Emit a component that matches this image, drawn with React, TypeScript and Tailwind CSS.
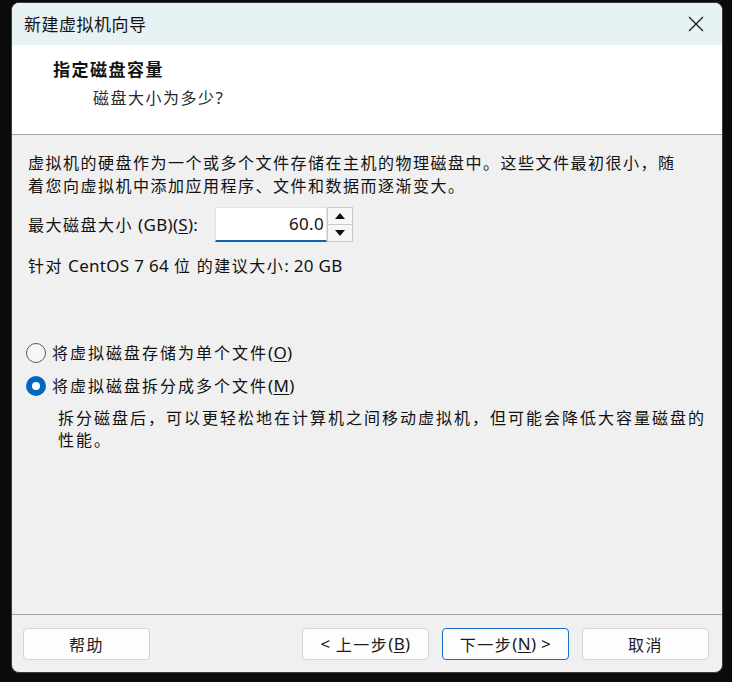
import React from 'react';

const cjk = { fontFamily: '"Noto Sans CJK SC", "Noto Sans", sans-serif' };

const U = ({ children }: { children: React.ReactNode }) => (
	<span className="underline underline-offset-2">{children}</span>
);

const Latin = ({ children }: { children: React.ReactNode }) => (
	<span className="tracking-[0.3px] text-[17px]" style={{ fontFamily: '"Noto Sans", "Noto Sans CJK SC", sans-serif' }}>
		{children}
	</span>
);

const Radio = ({ checked }: { checked?: boolean }) =>
	checked ? (
		<span className="w-[20px] h-[20px] rounded-full bg-[#0067c0] flex items-center justify-center shrink-0">
			<span className="w-[8px] h-[8px] rounded-full bg-white" />
		</span>
	) : (
		<span className="w-[20px] h-[20px] rounded-full border border-[#5a5a5a] bg-[#f6f6f6] shrink-0" />
	);

const Button = ({ children, primary }: { children: React.ReactNode; primary?: boolean }) => (
	<button
		className={
			primary
				? 'w-[127px] h-[32px] rounded-[4px] border border-[#1b6ec2] bg-[#fdfdfd] text-[16px] tracking-[1.5px] text-[#1a1a1a] flex items-center justify-center'
				: 'w-[127px] h-[32px] rounded-[4px] border border-[#d4d4d4] bg-[#fdfdfd] text-[16px] tracking-[1.5px] text-[#1a1a1a] flex items-center justify-center'
		}
	>
		{children}
	</button>
);

export default function App() {
	return (
		<div className="w-[732px] h-[682px] bg-[#0b0b0b] pt-[2px] pl-[11px]" style={cjk}>
			<div className="w-[712px] h-[671px] rounded-[8px] border border-[#3c3c3c] overflow-hidden bg-[#f0f0f0] flex flex-col text-[#111]">
				{/* title bar */}
				<div className="h-[42px] bg-[#e7f2f4] flex items-center justify-between pl-[12px] pr-[18px] shrink-0">
					<span className="text-[17px] tracking-[0.5px]">新建虚拟机向导</span>
					<svg width="16" height="16" viewBox="0 0 16 16" className="text-[#1a1a1a]">
						<path d="M1 1 L15 15 M15 1 L1 15" stroke="currentColor" strokeWidth="1.3" fill="none" />
					</svg>
				</div>

				{/* header */}
				<div className="h-[90px] bg-white border-b border-[#a3a3a3] shrink-0 pt-[12px] pl-[41px]">
					<div className="text-[17px] font-bold tracking-[1.5px] leading-[24px]">指定磁盘容量</div>
					<div className="text-[16px] tracking-[1.5px] leading-[24px] pl-[40px] mt-[4px] text-[#2a2a2a]">
						磁盘大小为多少<Latin>?</Latin>
					</div>
				</div>

				{/* body */}
				<div className="flex-1 px-[16px] pt-[16px] text-[16px] tracking-[1.5px]">
					<p className="leading-[23px]">
						虚拟机的硬盘作为一个或多个文件存储在主机的物理磁盘中。这些文件最初很小，随
						<br />
						着您向虚拟机中添加应用程序、文件和数据而逐渐变大。
					</p>

					<div className="flex items-center mt-[10px] h-[35px]">
						<span className="w-[187px]">
							最大磁盘大小 <Latin>(GB)(<U>S</U>):</Latin>
						</span>
						<div className="w-[112px] h-[35px] bg-white border border-[#e3e3e3] border-b-2 border-b-[#0a64ad] flex items-center justify-end pr-[2px]">
							<Latin>60.0</Latin>
						</div>
						<div className="w-[26px] h-[35px] border border-[#c9c9c9] bg-[#f7f7f7] flex flex-col">
							<div className="flex-1 flex items-center justify-center border-b border-[#c9c9c9]">
								<svg width="10" height="6" viewBox="0 0 10 6">
									<path d="M5 0 L10 6 L0 6 Z" fill="#111" />
								</svg>
							</div>
							<div className="flex-1 flex items-center justify-center">
								<svg width="10" height="6" viewBox="0 0 10 6">
									<path d="M0 0 L10 0 L5 6 Z" fill="#111" />
								</svg>
							</div>
						</div>
					</div>

					<div className="mt-[12px] leading-[23px]">
						针对 <Latin>CentOS 7 64</Latin> 位 的建议大小<Latin>: 20 GB</Latin>
					</div>

					<div className="mt-[59px] flex flex-col">
						<label className="flex items-center gap-[6px] h-[33px] -ml-[2px]">
							<Radio />
							<span className="tracking-[2px]">
								将虚拟磁盘存储为单个文件<Latin>(<U>O</U>)</Latin>
							</span>
						</label>
						<label className="flex items-center gap-[6px] h-[33px] -ml-[2px]">
							<Radio checked />
							<span className="tracking-[2px]">
								将虚拟磁盘拆分成多个文件<Latin>(<U>M</U>)</Latin>
							</span>
						</label>
						<p className="pl-[30px] leading-[22px] mt-[4px] tracking-[2px]">
							拆分磁盘后，可以更轻松地在计算机之间移动虚拟机，但可能会降低大容量磁盘的
							<br />
							性能。
						</p>
					</div>
				</div>

				{/* footer */}
				<div className="h-[58px] border-t border-[#a3a3a3] shrink-0 flex items-start pt-[13px] pl-[11px] pr-[13px]">
					<Button>帮助</Button>
					<div className="flex-1" />
					<div className="flex gap-[13px]">
						<Button>
							<Latin>&lt;</Latin>&nbsp;上一步<Latin>(<U>B</U>)</Latin>
						</Button>
						<Button primary>
							下一步<Latin>(<U>N</U>) &gt;</Latin>
						</Button>
						<Button>取消</Button>
					</div>
				</div>
			</div>
		</div>
	);
}
